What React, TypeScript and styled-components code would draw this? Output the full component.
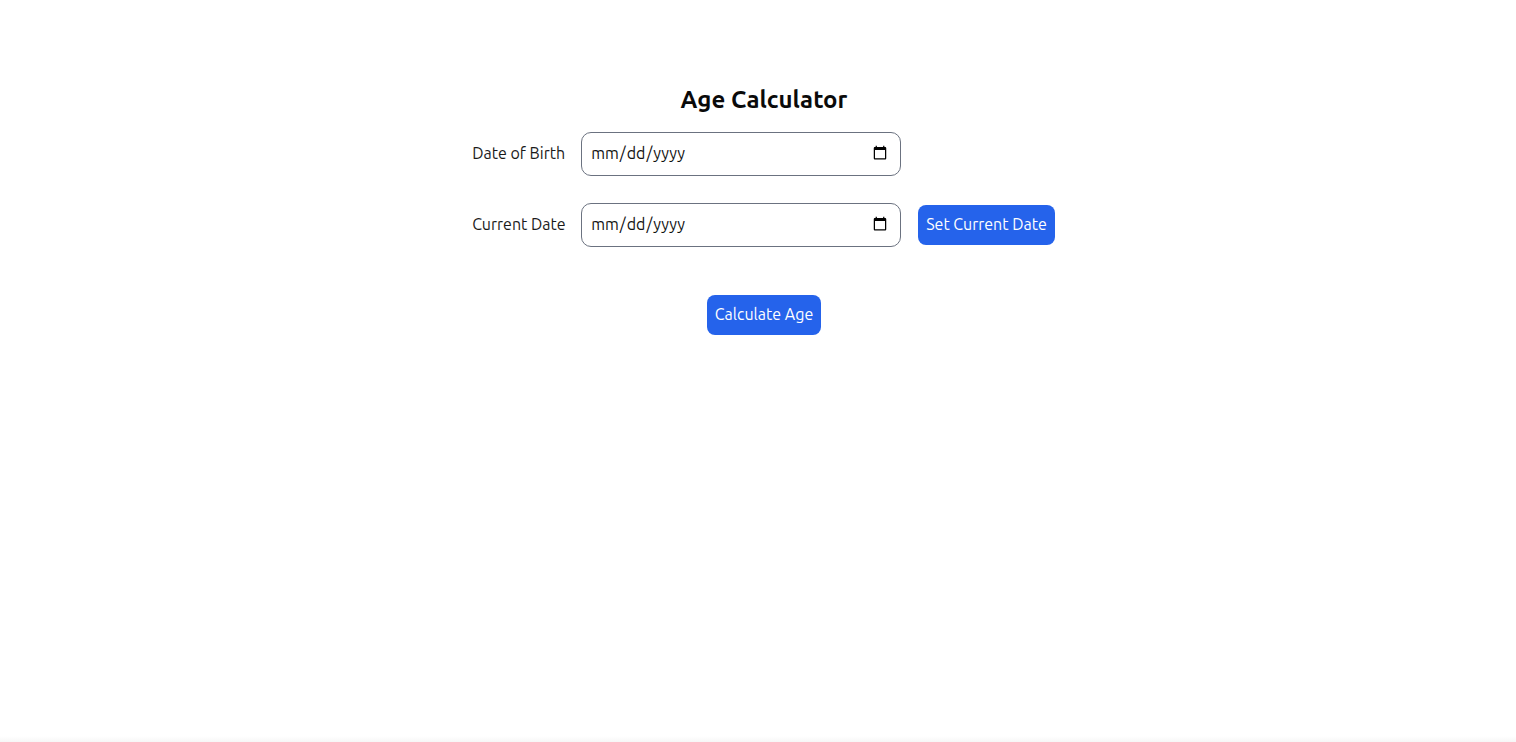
import React from "react";
import styled, { createGlobalStyle } from "styled-components";

const Global = createGlobalStyle`
  html, body { margin: 0; padding: 0; background: #ffffff; }
  body { font-family: "Ubuntu", "Lato", "Noto Sans", sans-serif; color: #111111; }
  #root { min-height: 742px; }
`;

const Page = styled.main`
  min-height: 742px;
  box-sizing: border-box;
  padding: 85px 0 0 12px;
  display: flex;
  flex-direction: column;
  align-items: center;
  background: linear-gradient(to bottom, #ffffff 0, #ffffff 736px, #f6f6f6 742px);
`;

const Title = styled.h1`
  margin: 0 0 17px;
  font-size: 24px;
  line-height: 30px;
  font-weight: 700;
  color: #0a0a0a;
`;

const Form = styled.div`
  display: grid;
  grid-template-columns: 92px 321px auto;
  column-gap: 16px;
  row-gap: 27px;
  align-items: center;
`;

const Label = styled.label`
  font-size: 16px;
  color: #1a1a1a;
  grid-column: 1;
  white-space: nowrap;
  margin-left: -1px;
  padding-bottom: 2px;
`;

const DateInput = styled.input`
  grid-column: 2;
  box-sizing: border-box;
  width: 320px;
  height: 44px;
  padding: 0 10px 2px 8px;
  border: 1px solid #6b7280;
  border-radius: 10px;
  font-family: inherit;
  font-size: 16px;
  color: #111111;
  background: #ffffff;
  outline: none;
`;

const Button = styled.button`
  box-sizing: border-box;
  height: 40px;
  padding: 0 8px 2px;
  border: none;
  border-radius: 8px;
  background: #2563eb;
  color: #ffffff;
  font-family: inherit;
  font-size: 16px;
  cursor: pointer;
  justify-self: start;
  white-space: nowrap;
`;

const Actions = styled.div`
  margin-top: 48px;
  display: flex;
  justify-content: center;
`;

export default function App() {
  return (
    <>
      <Global />
      <Page>
        <Title>Age Calculator</Title>
        <Form>
          <Label htmlFor="dob">Date of Birth</Label>
          <DateInput id="dob" type="date" />
          <span />
          <Label htmlFor="cur">Current Date</Label>
          <DateInput id="cur" type="date" />
          <Button type="button">Set Current Date</Button>
        </Form>
        <Actions>
          <Button type="button">Calculate Age</Button>
        </Actions>
      </Page>
    </>
  );
}
